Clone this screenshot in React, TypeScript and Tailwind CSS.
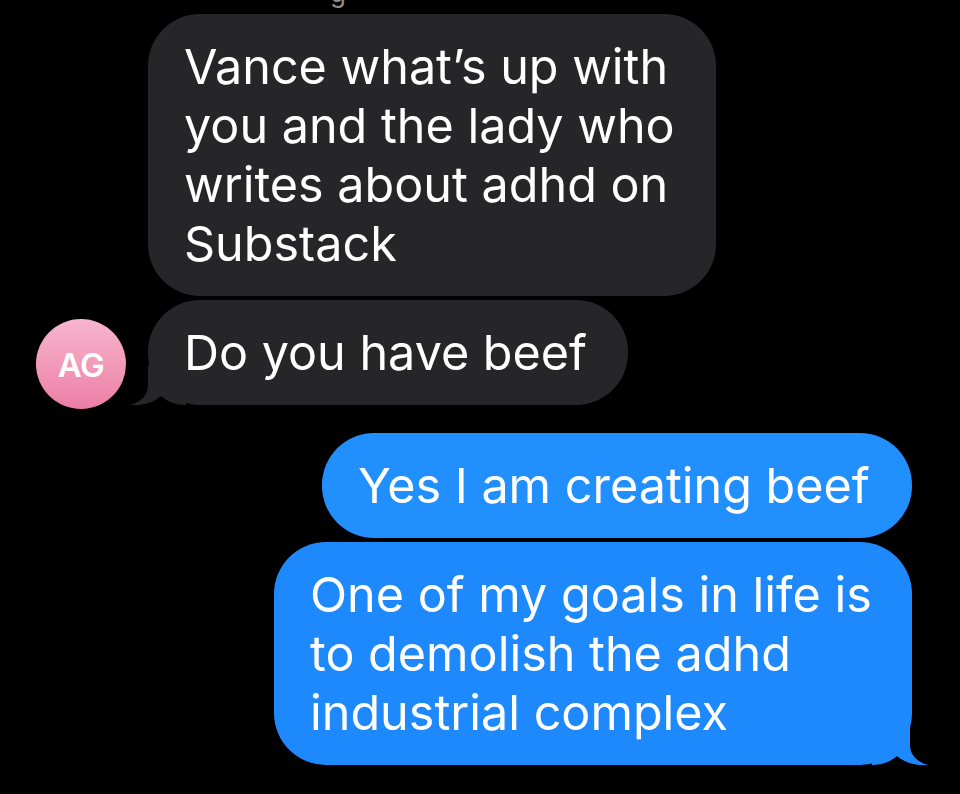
const font = { fontFamily: "Inter, 'Liberation Sans', sans-serif" };

function Tail({ color, flip }: { color: string; flip?: boolean }) {
  return (
    <svg
      width="56"
      height="40"
      viewBox="0 0 56 40"
      className={
        flip
          ? "absolute bottom-0 right-[-16px] -scale-x-100"
          : "absolute bottom-0 left-[-18px]"
      }
    >
      <path
        d="M18 0 L18 20 C18 30 11 37 0 40 C11 41 23 38 31 31 C38 37 46 40 56 40 L56 0 Z"
        fill={color}
      />
    </svg>
  );
}

function Bubble({
  lines,
  width,
  bg,
  tail,
  tailColor,
  flip,
}: {
  lines: string[];
  width: string;
  bg: string;
  tail?: boolean;
  tailColor?: string;
  flip?: boolean;
}) {
  return (
    <div
      className={`relative ${width} ${bg} rounded-[52px] px-[36px] py-[23px] text-[48.5px] leading-[59px] text-white`}
    >
      {lines.map((l, i) => (
        <div key={i} className="whitespace-nowrap">
          {l}
        </div>
      ))}
      {tail && tailColor && <Tail color={tailColor} flip={flip} />}
    </div>
  );
}

export default function App() {
  return (
    <div className="min-h-screen w-[960px] h-[794px] overflow-hidden bg-black" style={font}>
      <div className="h-[14px] overflow-hidden pl-[330px]">
        <div className="text-[26px] leading-[26px] text-[#8e8e93] mt-[-20px]">g</div>
      </div>

      <div className="flex flex-col pl-[36px]">
        <div className="flex items-end gap-[22px]">
          <div className="w-[90px]" />
          <Bubble
            width="w-[568px]"
            bg="bg-[#262629]"
            lines={[
              "Vance what\u2019s up with",
              "you and the lady who",
              "writes about adhd on",
              "Substack",
            ]}
          />
        </div>

        <div className="mt-[4px] flex items-end gap-[22px]">
          <div className="mb-[-4px] flex h-[90px] w-[90px] items-center justify-center rounded-full bg-gradient-to-b from-[#f6b6cd] to-[#ec7ea6]">
            <span className="mt-[4px] text-[33px] font-semibold text-white tracking-[-0.5px]">AG</span>
          </div>
          <Bubble
            width="w-[480px]"
            bg="bg-[#262629]"
            lines={["Do you have beef"]}
            tail
            tailColor="#262629"
          />
        </div>
      </div>

      <div className="mt-[28px] flex flex-col items-end pr-[48px]">
        <Bubble
          width="w-[590px]"
          bg="bg-[#2190fe]"
          lines={["Yes I am creating beef"]}
        />
        <div className="mt-[4px]">
          <Bubble
            width="w-[638px]"
            bg="bg-[#1e89fd]"
            lines={[
              "One of my goals in life is",
              "to demolish the adhd",
              "industrial complex",
            ]}
            tail
            tailColor="#1e89fd"
            flip
          />
        </div>
      </div>
    </div>
  );
}
